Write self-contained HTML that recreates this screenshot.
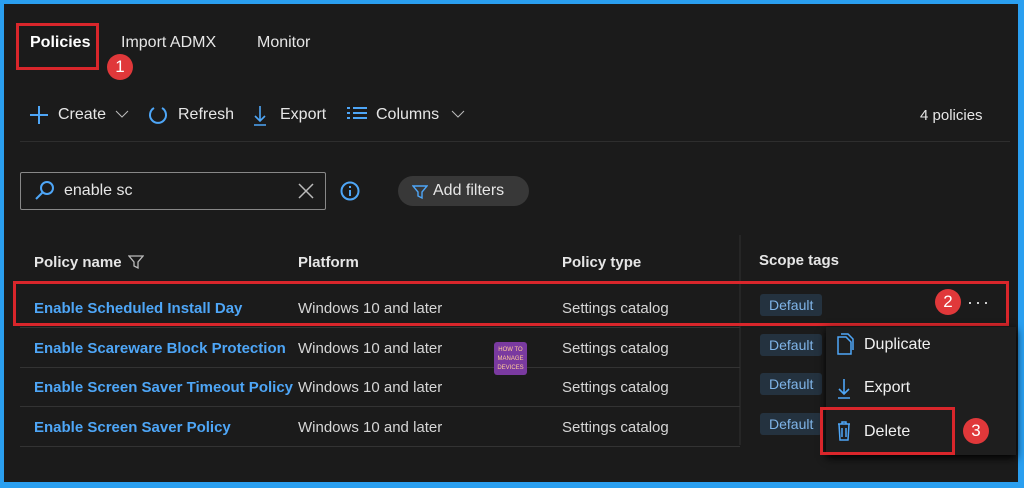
<!DOCTYPE html>
<html><head><style>
*{margin:0;padding:0;box-sizing:border-box}
body{width:1024px;height:488px;background:#2a9ff0;position:relative;overflow:hidden;font-family:"Liberation Sans",sans-serif;color:#e6e6e6}
#m{position:absolute;left:4px;top:4px;width:1014px;height:478px;background:#1b1b1b}
.a{position:absolute;white-space:nowrap}
.t{font-size:16px}
.lnk{color:#4ea6f7;font-size:15px;font-weight:bold}
.cell{font-size:15px;color:#d6d6d6}
.tag{position:absolute;background:#24323f;color:#7fb4e8;font-size:14px;padding:3px 9px;border-radius:3px}
.sep{position:absolute;left:20px;width:720px;height:1px;background:#333}
.red{position:absolute;border:3px solid #d9262b}
.num{position:absolute;width:26px;height:26px;border-radius:50%;background:#e0383a;color:#fff;font-size:17px;text-align:center;line-height:26px}
</style></head><body>
<div id="m"></div>
<div class="a t" style="left:30px;top:34px;font-weight:bold;color:#fff">Policies</div>
<div class="a t" style="left:121px;top:34px">Import ADMX</div>
<div class="a t" style="left:257px;top:34px">Monitor</div>
<div class="red" style="left:16px;top:23px;width:83px;height:47px"></div>
<div class="num" style="left:107px;top:54px">1</div>

<svg class="a" style="left:28px;top:104px" width="22" height="22"><path d="M11 2v18M2 11h18" stroke="#4ea6f7" stroke-width="2"/></svg>
<div class="a t" style="left:58px;top:106px">Create</div>
<svg class="a" style="left:115px;top:108px" width="14" height="12"><path d="M1 3l6 6 6-6" stroke="#bbb" fill="none"/></svg>
<svg class="a" style="left:147px;top:104px" width="22" height="22"><path d="M7 4A8 8 0 1 0 15 4" stroke="#4ea6f7" stroke-width="2" fill="none"/></svg>
<div class="a t" style="left:178px;top:106px">Refresh</div>
<svg class="a" style="left:251px;top:104px" width="18" height="22"><path d="M9 2v15M4 12l5 5 5-5M3 21h12" stroke="#4ea6f7" stroke-width="1.6" fill="none"/></svg>
<div class="a t" style="left:280px;top:106px">Export</div>
<svg class="a" style="left:346px;top:106px" width="22" height="16"><path d="M1 2h3M1 7h3M1 12h3M7 2h14M7 7h14M7 12h14" stroke="#4ea6f7" stroke-width="2"/></svg>
<div class="a t" style="left:376px;top:106px">Columns</div>
<svg class="a" style="left:451px;top:108px" width="14" height="12"><path d="M1 3l6 6 6-6" stroke="#bbb" fill="none"/></svg>
<div class="a" style="left:920px;top:107px;font-size:15px">4 policies</div>
<div class="a" style="left:20px;top:141px;width:990px;height:1px;background:#2e2e2e"></div>

<div class="a" style="left:20px;top:172px;width:306px;height:38px;border:1px solid #888;border-radius:2px"></div>
<svg class="a" style="left:34px;top:180px" width="22" height="22"><circle cx="13" cy="8" r="6" stroke="#4ea6f7" stroke-width="2" fill="none"/><path d="M9 12l-7 7" stroke="#4ea6f7" stroke-width="2"/></svg>
<div class="a t" style="left:64px;top:182px">enable sc</div>
<svg class="a" style="left:297px;top:182px" width="18" height="18"><path d="M2 2l14 14M16 2L2 16" stroke="#bbb" stroke-width="1.5"/></svg>
<svg class="a" style="left:339px;top:180px" width="22" height="22"><circle cx="11" cy="11" r="8.5" stroke="#4ea6f7" stroke-width="2" fill="none"/><path d="M11 10v6M11 6v2" stroke="#4ea6f7" stroke-width="2"/></svg>
<div class="a" style="left:398px;top:176px;width:131px;height:30px;border-radius:15px;background:#383838"></div>
<svg class="a" style="left:412px;top:184px" width="16" height="16"><path d="M1 2h14l-5 6v6l-4-2v-4z" stroke="#4ea6f7" stroke-width="1.4" fill="none"/></svg>
<div class="a t" style="left:433px;top:182px">Add filters</div>

<div class="a" style="left:739px;top:235px;width:2px;height:210px;background:#262626"></div>
<div class="a" style="left:34px;top:254px;font-size:15px;font-weight:bold">Policy name</div>
<svg class="a" style="left:128px;top:254px" width="16" height="16"><path d="M1 2h14l-5 6v6l-4-2v-4z" stroke="#bbb" stroke-width="1.3" fill="none"/></svg>
<div class="a" style="left:298px;top:254px;font-size:15px;font-weight:bold">Platform</div>
<div class="a" style="left:562px;top:254px;font-size:15px;font-weight:bold">Policy type</div>
<div class="a" style="left:759px;top:252px;font-size:15px;font-weight:bold">Scope tags</div>
<div class="sep" style="top:282px"></div>

<div class="a lnk" style="left:34px;top:300px">Enable Scheduled Install Day</div>
<div class="a cell" style="left:298px;top:300px">Windows 10 and later</div>
<div class="a cell" style="left:562px;top:300px">Settings catalog</div>
<div class="tag" style="left:760px;top:294px">Default</div>
<div class="sep" style="top:327px"></div>

<div class="a lnk" style="left:34px;top:340px;width:252px;overflow:hidden">Enable Scareware Block Protection i</div>
<div class="a cell" style="left:298px;top:340px">Windows 10 and later</div>
<div class="a cell" style="left:562px;top:340px">Settings catalog</div>
<div class="tag" style="left:760px;top:334px">Default</div>
<div class="sep" style="top:367px"></div>

<div class="a lnk" style="left:34px;top:379px">Enable Screen Saver Timeout Policy</div>
<div class="a cell" style="left:298px;top:379px">Windows 10 and later</div>
<div class="a cell" style="left:562px;top:379px">Settings catalog</div>
<div class="tag" style="left:760px;top:373px">Default</div>
<div class="sep" style="top:406px"></div>

<div class="a lnk" style="left:34px;top:419px">Enable Screen Saver Policy</div>
<div class="a cell" style="left:298px;top:419px">Windows 10 and later</div>
<div class="a cell" style="left:562px;top:419px">Settings catalog</div>
<div class="tag" style="left:760px;top:413px">Default</div>
<div class="sep" style="top:446px"></div>

<div class="a" style="left:494px;top:342px;width:33px;height:33px;background:#7a3aa0;border-radius:3px;font-size:6px;color:#fc9;text-align:center;line-height:9px;padding-top:4px">HOW TO<br>MANAGE<br>DEVICES</div>

<div class="red" style="left:13px;top:281px;width:996px;height:45px"></div>
<div class="num" style="left:935px;top:289px">2</div>
<div class="a" style="left:967px;top:292px;font-size:18px;letter-spacing:2px">···</div>

<div class="a" style="left:826px;top:327px;width:190px;height:128px;background:#1e1e1e;box-shadow:0 3px 8px #000"></div>
<svg class="a" style="left:835px;top:333px" width="20" height="22"><path d="M3 4h8l5 5v12H3z M6 1h7l5 5v11" stroke="#4ea6f7" stroke-width="1.5" fill="none"/></svg>
<div class="a t" style="left:864px;top:336px;color:#f0f0f0">Duplicate</div>
<svg class="a" style="left:836px;top:377px" width="16" height="22"><path d="M8 2v15M3 12l5 5 5-5M2 21h12" stroke="#4ea6f7" stroke-width="1.6" fill="none"/></svg>
<div class="a t" style="left:864px;top:379px;color:#f0f0f0">Export</div>
<svg class="a" style="left:836px;top:420px" width="16" height="22"><path d="M2 4h12M6 4V2h4v2M3 4l1 16h8l1-16M6 8v9M10 8v9" stroke="#4ea6f7" stroke-width="1.5" fill="none"/></svg>
<div class="a t" style="left:864px;top:423px;color:#f0f0f0">Delete</div>
<div class="red" style="left:820px;top:407px;width:135px;height:48px"></div>
<div class="num" style="left:963px;top:418px">3</div>
</body></html>
